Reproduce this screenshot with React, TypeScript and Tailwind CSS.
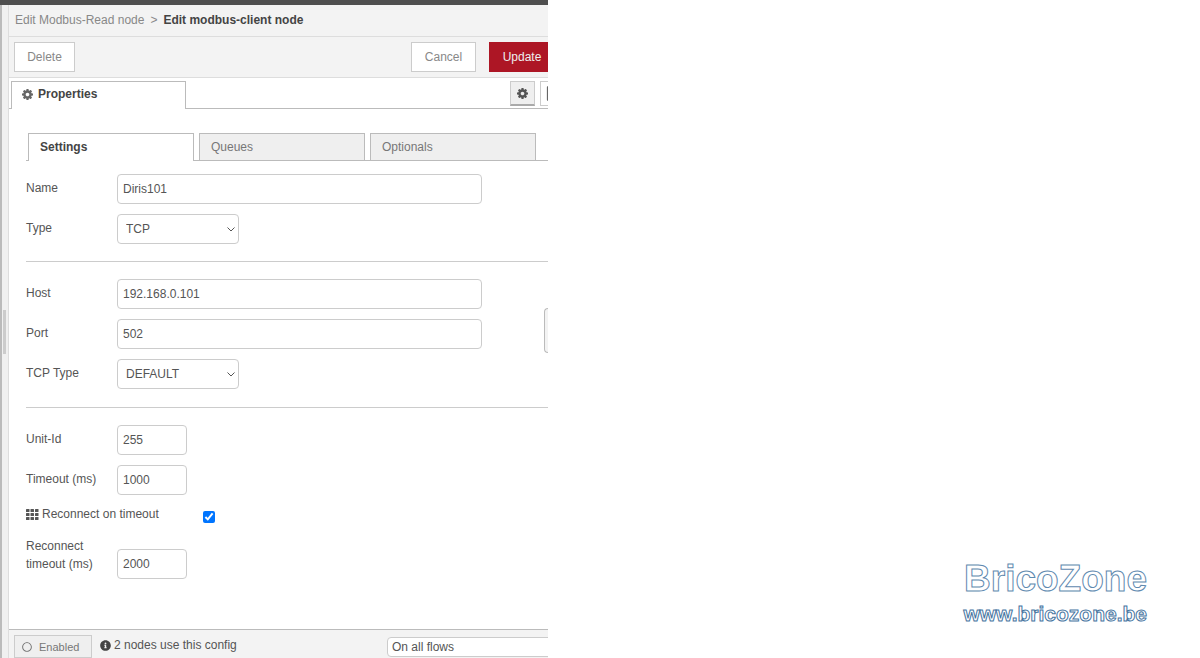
import React from "react";
import { FaInfoCircle, FaRegCircle, FaRegFile } from "react-icons/fa";

type TField = {
  id: string;
  label: string;
  value: string;
  kind: "text" | "short" | "select";
};

const general: TField[] = [
  { id: "name", label: "Name", value: "Diris101", kind: "text" },
  { id: "type", label: "Type", value: "TCP", kind: "select" },
];

const network: TField[] = [
  { id: "host", label: "Host", value: "192.168.0.101", kind: "text" },
  { id: "port", label: "Port", value: "502", kind: "text" },
  { id: "tcp-type", label: "TCP Type", value: "DEFAULT", kind: "select" },
];

const timing: TField[] = [
  { id: "unit-id", label: "Unit-Id", value: "255", kind: "short" },
  { id: "timeout", label: "Timeout (ms)", value: "1000", kind: "short" },
];

const CogIcon = ({ className }: { className?: string }) => (
  <svg
    viewBox="0 128 1536 1536"
    fill="currentColor"
    className={className}
    aria-hidden="true"
  >
    <path d="M1024 896q0-106-75-181t-181-75-181 75-75 181 75 181 181 75 181-75 75-181zm512-109v222q0 12-8 23t-20 13l-185 28q-19 54-39 91 35 50 107 138 10 12 10 25t-9 23q-27 37-99 108t-94 71q-12 0-26-9l-138-108q-44 23-91 38-16 136-29 186-7 28-36 28h-222q-14 0-24.5-8.5t-11.5-21.5l-28-184q-49-16-90-37l-141 107q-10 9-25 9-14 0-25-11-126-114-165-168-7-10-7-23 0-12 8-23 15-21 51-66.500t54-70.500q-27-50-41-99l-183-27q-13-2-21-12.500t-8-23.500v-222q0-12 8-23t19-13l186-28q14-46 39-92-40-57-107-138-10-12-10-24 0-10 9-23 26-36 98.500-107.500t94.500-71.500q13 0 26 10l138 107q44-23 91-38 16-136 29-186 7-28 36-28h222q14 0 24.500 8.500t11.500 21.500l28 184q49 16 90 37l142-107q9-9 24-9 13 0 25 10 129 119 165 170 7 8 7 22 0 12-8 23-15 21-51 66.500t-54 70.500q26 50 41 98l183 28q13 2 21 12.500t8 23.500z" />
  </svg>
);

const GridIcon = () => (
  <svg
    viewBox="0 0 13 11"
    fill="currentColor"
    className="w-[13px] h-[11px]"
    aria-hidden="true"
  >
    {[0, 4, 8].map((y) =>
      [0, 4.5, 9].map((x) => (
        <rect key={`${x}-${y}`} x={x} y={y} width="3.5" height="3" rx="0.5" />
      ))
    )}
  </svg>
);

const Field = ({ id, label, value, kind }: TField) => {
  return (
    <div className="flex items-center">
      <label htmlFor={id} className="w-[91px] shrink-0 pb-0.5">
        {label}
      </label>
      {kind === "select" ? (
        <div className="relative">
          <select
            id={id}
            className="appearance-none w-[122px] h-[30px] border border-[#ccc] rounded bg-white pl-2 text-[#555]"
          >
            <option>{value}</option>
          </select>
          <svg
            viewBox="0 0 8 5"
            fill="none"
            stroke="#555"
            className="absolute right-1 top-[13px] w-2 h-[5px] pointer-events-none"
            aria-hidden="true"
          >
            <path d="M0.500 0.500L4 4L7.500 0.500" />
          </svg>
        </div>
      ) : (
        <input
          id={id}
          type="text"
          defaultValue={value}
          className={
            kind === "short"
              ? "w-[70px] h-[30px] border border-[#ccc] rounded bg-white px-[5px]"
              : "w-[70%] h-[30px] border border-[#ccc] rounded bg-white px-[5px]"
          }
        />
      )}
    </div>
  );
};

const Sidebar = () => (
  <div className="w-[9px] shrink-0 flex items-center bg-[#f0f0f0] border-l-2 border-l-[#bbb] border-r border-r-[#ddd]">
    <div className="w-[3px] h-[44px] ml-px bg-[#ccc]" />
  </div>
);

const Editor = () => {
  return (
    <div className="relative flex flex-col min-w-0 flex-1 overflow-hidden">
      <div className="flex items-center h-8 pl-1.5 pb-px bg-[#f3f3f3] border-b border-[#ddd]">
        <a href="#modbus-read" className="text-[#888]">
          Edit Modbus-Read node
        </a>
        <span className="mx-1.5 text-[#888]">&gt;</span>
        <h1 className="font-bold text-[#444]">Edit modbus-client node</h1>
      </div>

      <div className="flex items-center h-[41px] pl-[5px] bg-[#f3f3f3] border-b border-[#ddd]">
        <button className="w-[61px] h-[30px] border border-[#ccc] bg-white text-[#888]">
          Delete
        </button>
        <div className="flex gap-[13px] ml-auto -mr-[7px]">
          <button className="w-[65px] h-[30px] border border-[#ccc] bg-white text-[#888]">
            Cancel
          </button>
          <button className="w-[66px] h-[30px] bg-[#ad1625] text-[#eee]">
            Update
          </button>
        </div>
      </div>

      <div className="flex h-[31px] pt-[3px] border-b border-[#bbb]">
        <button className="flex items-center gap-[5px] w-[175px] h-7 ml-0.5 pl-[10px] pb-[3px] border border-b-0 border-[#bbb] bg-white font-bold text-[#444]">
          <CogIcon className="w-[11px] h-[11px] text-[#666]" />
          Properties
        </button>
        <div className="flex gap-[5px] ml-auto -mr-[17px]">
          <button
            aria-label="Properties"
            className="flex items-center justify-center w-[25px] h-[25px] border border-b-2 border-[#ccc] border-b-[#aaa] bg-[#efefef] text-[#555]"
          >
            <CogIcon className="w-[11px] h-[11px]" />
          </button>
          <button
            aria-label="Description"
            className="flex items-center justify-center w-[25px] h-[25px] border border-[#ccc] bg-white text-[#666]"
          >
            <FaRegFile size={15} />
          </button>
        </div>
      </div>

      <div className="flex-1 pl-[17px] pt-6 pb-12">
        <div className="flex gap-[5px] h-7 pl-0.5 border-b border-[#bbb]">
          <button className="w-[166px] h-7 pl-[11px] pb-0.5 border border-b-0 border-[#bbb] bg-white text-left font-bold text-[#444]">
            Settings
          </button>
          <button className="w-[166px] pl-[11px] pb-px border border-b-0 border-[#bbb] bg-[#efefef] text-left text-[#777]">
            Queues
          </button>
          <button className="w-[166px] pl-[11px] pb-px border border-b-0 border-[#bbb] bg-[#efefef] text-left text-[#777]">
            Optionals
          </button>
        </div>

        <form>
          <div className="flex flex-col gap-[10px] pt-[13px] pb-[17px] border-b border-[#ccc]">
            {general.map((field) => (
              <Field key={field.id} {...field} />
            ))}
          </div>
          <div className="flex flex-col gap-[10px] pt-[17px] pb-[18px] border-b border-[#ccc]">
            {network.map((field) => (
              <Field key={field.id} {...field} />
            ))}
          </div>
          <div className="flex flex-col gap-[10px] pt-[17px]">
            {timing.map((field) => (
              <Field key={field.id} {...field} />
            ))}
            <div className="flex items-center h-5">
              <label htmlFor="reconnect" className="flex items-center gap-[3px] w-[177px] pb-0.5">
                <GridIcon />
                Reconnect on timeout
              </label>
              <input id="reconnect" type="checkbox" defaultChecked className="w-3 h-3 mt-1" />
            </div>
            <div className="flex items-end h-11">
              <label htmlFor="reconnect-timeout" className="w-[91px] pb-1.5">
                Reconnect timeout (ms)
              </label>
              <input
                id="reconnect-timeout"
                type="text"
                defaultValue="2000"
                className="w-[70px] h-[30px] border border-[#ccc] rounded bg-white px-[5px]"
              />
            </div>
          </div>
        </form>
      </div>

      <div className="flex items-start h-[29px] pl-[5px] pt-[5px] bg-[#f3f3f3] border-t border-[#bbb]">
        <button className="flex items-center gap-[7px] w-[78px] h-[23px] pl-[7px] border border-[#ccc] bg-[#efefef] text-[11px] text-[#777]">
          <FaRegCircle size={10} />
          Enabled
        </button>
        <div className="flex items-center gap-[3px] h-5 ml-2">
          <FaInfoCircle size={11} className="text-[#444]" />
          2 nodes use this config
        </div>
        <select
          aria-label="Scope"
          className="w-[200px] h-5 mt-0.5 ml-auto -mr-[39px] border border-[#ccc] rounded bg-white"
        >
          <option>On all flows</option>
        </select>
      </div>

      {/* handle of the collapsed sidebar */}
      <div className="absolute right-0 top-[303px] w-1 h-[45px] rounded-l border border-r-0 border-[#bbb] bg-[#f3f3f3]" />
    </div>
  );
};

const Brand = () => (
  <a
    href="#bricozone"
    className="flex flex-col self-end items-end mr-[53px] mb-[30px] font-bold text-white"
  >
    <span className="text-[37px] leading-[42px] [-webkit-text-stroke:1px_#5f8ab0]">
      BricoZone
    </span>
    <span className="text-[21px] leading-[28px] [-webkit-text-stroke:1px_#47759f]">
      www.bricozone.be
    </span>
  </a>
);

const App = () => {
  return (
    <div className="flex min-h-screen bg-white font-['Liberation_Sans',Arial,sans-serif] text-[12px] leading-[18px] text-[#555]">
      <div className="flex flex-col w-[548px] max-w-full shrink-0">
        <div className="h-[5px] bg-[#4f4f4f]" />
        <div className="flex flex-1">
          <Sidebar />
          <Editor />
        </div>
      </div>
      <div className="flex flex-1 justify-end">
        <Brand />
      </div>
    </div>
  );
};

export default App;
